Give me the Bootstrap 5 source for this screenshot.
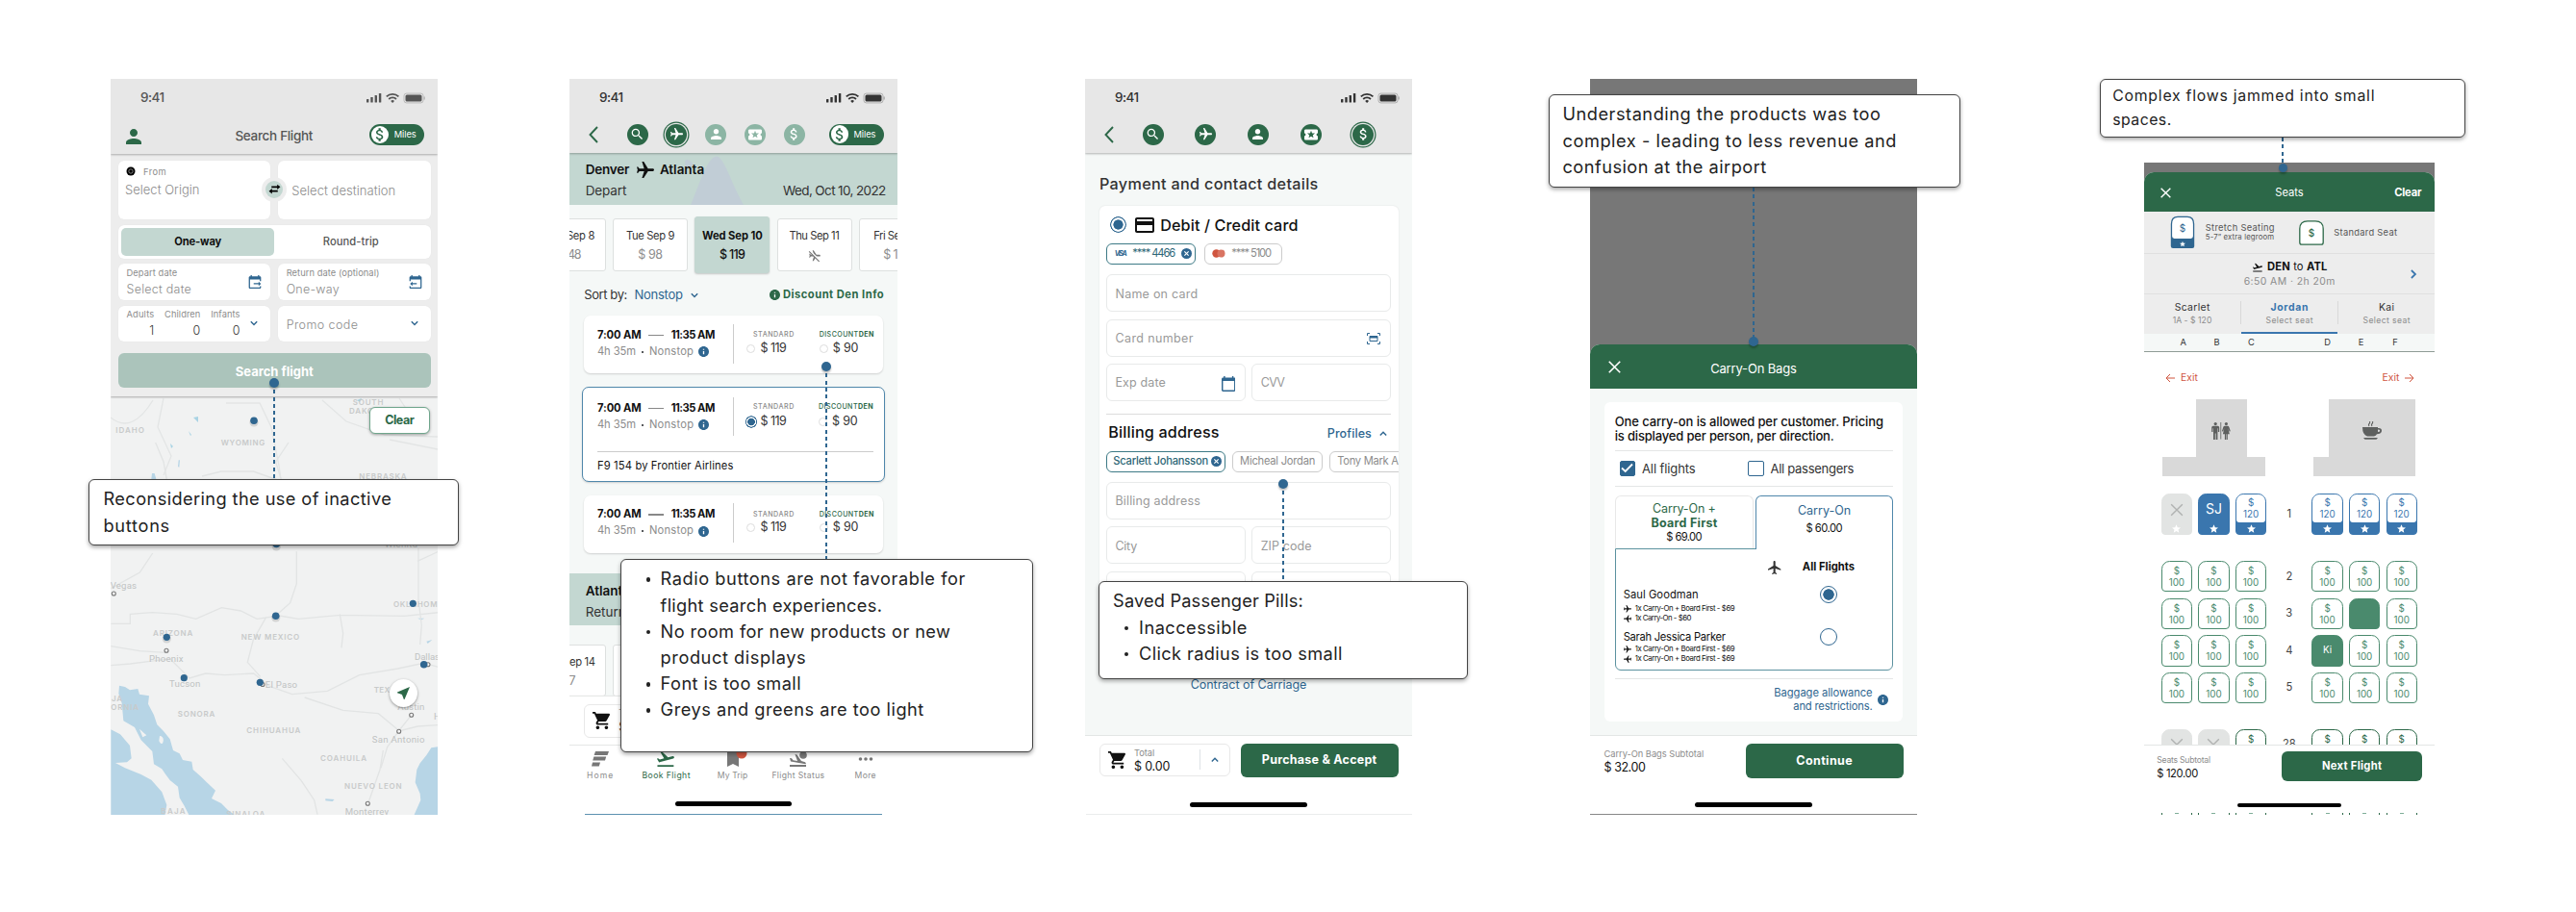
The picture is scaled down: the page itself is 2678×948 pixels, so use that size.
<!DOCTYPE html>
<html lang="en">
<head>
<meta charset="utf-8">
<meta name="viewport" content="width=device-width, initial-scale=1">
<title>Booking flow audit</title>
<link rel="stylesheet" href="https://cdn.jsdelivr.net/npm/bootstrap@5.3.0/dist/css/bootstrap.min.css">
<style>
:root{--green:#2c6848;--blue:#2f6690;--mint:#c3d7d1;--pale:#f5f8f7;--mute:#8c8c8c}
body{margin:0;background:#fff;font-family:Inter,"Liberation Sans",sans-serif;color:#333;line-height:1;width:2678px;height:948px;overflow:hidden}
.board{padding:82px 0 0 115px}
.phone{width:340px;height:765px;flex:none}
.p2{margin-left:137px;width:341px}.p3{margin-left:195px}.p4{margin-left:185px}.p5{margin-left:236px;width:302px;height:678px;margin-top:87px}
.screen{height:100%;overflow:hidden;background:#fff}
[data-w]{white-space:nowrap;display:inline-block;flex:none}
.f7{font-size:7.1px}.f75{font-size:7.8px}.f8{font-size:8.6px}.f9{font-size:9.3px}.f10{font-size:10.400px}.f11{font-size:11.200px}.f12{font-size:12.500px}.f125{font-size:13px}.f13{font-size:13.500px}.f16{font-size:16.200px}
.w5{font-weight:500}.w6{font-weight:600}.w7{font-weight:700}.w3{font-weight:350}
.tg{color:var(--green)}.tb{color:var(--blue)}.tm{color:var(--mute)}.td{color:#111}.t5{color:#555}
.ic{fill:currentColor;flex:none;display:block}
.s8{width:8px;height:8px}.s10{width:10px;height:10px}.s13{width:13px;height:13px}.s14{width:14px;height:14px}.s16{width:16px;height:16px}.s18{width:18px;height:18px}
.s11{width:11px;height:11px}
.ln{stroke:currentColor;fill:none}
.rot{transform:rotate(90deg)}.rotl{transform:rotate(-90deg)}
/* top bars */
.top{background:#e7e7e7;height:76.7px;box-shadow:0 1px 2px rgba(0,0,0,.28);position:relative;z-index:2;flex:none}
.p1 .top{height:78px}
.status{height:39px;padding:0 13px 0 31px}
.steps{height:37.4px;padding:0 14.5px 0 20px}
.steps .back{width:10px;height:18px;margin-right:29.5px;color:var(--green)}
.step{width:22px;height:22px;border-radius:50%;background:var(--green);color:#fff;flex:none}
.step.off{background:#8cb5a4}
.step.now{box-shadow:0 0 0 1.3px #e7e7e7,0 0 0 2.5px var(--green)}
.steplist{gap:18.8px}.p3 .steplist{gap:32.7px}
.miles{width:56.4px;height:22px;border-radius:11px;background:var(--green);color:#fff;padding:0 8px 0 1.4px}
.miles i{width:18.6px;height:18.6px;border-radius:50%;background:#fff;color:var(--green)}
/* search form */
.p1 .navr{height:38px;padding:0 14.3px 0 15.5px}
.p1 .navr .ttl{margin-left:39px;padding-top:4px}
.form1{background:#ededed;height:252px;padding:6.7px 7.5px 0 8px;box-shadow:0 1px 2px rgba(0,0,0,.3);position:relative;z-index:1;flex:none}
.g2{display:grid;grid-template-columns:1fr 1fr;column-gap:7.8px}
.box1{background:#fff;border-radius:6px;box-shadow:0 0 1px rgba(0,0,0,.08)}
.route .box1{height:61px}
.from1{margin-top:6.5px}.orig1{margin-top:7.6px;margin-left:-1px}
.swap{left:149px;top:17px;width:26px;height:26px;border-radius:50%;background:#ededed}
.swap i{width:18px;height:18px;border-radius:50%;background:var(--mint);color:#000}
.seg{height:35px;margin-top:6.3px;padding:3.3px;}
.seg .on{background:var(--mint);border-radius:5px;height:28.3px}
.dates1{margin-top:5.5px}.dates1 .box1{height:37.6px;padding:0 9px 0 8.5px}
.search1{margin-top:12px;height:36.3px;border-radius:6px;background:#abc4bb;color:#fff;padding-top:1.500px}
.lab2{gap:6px}
.mapbox{height:435px;position:relative;flex:none}
.mapbox svg.map{display:block;width:340px;height:435px}
.clearbtn{right:8px;top:11.3px;width:63px;height:28px;border:1px solid #6fa68c;border-radius:6px;background:#fff;box-shadow:0 1px 3px rgba(0,0,0,.35)}
.locate{left:290px;top:294px;width:29px;height:29px;border-radius:50%;background:#fff;box-shadow:0 1px 3px rgba(0,0,0,.4)}
/* flight list */
.pale{background:var(--pale)}
.strip{background:var(--mint);height:54px;padding:9.4px 11.7px 0 16.7px;position:relative;flex:none}
.strip .city{height:18px}.strip .when{margin-top:6.200px}
.strip svg.hill{position:absolute;left:120px;top:0;z-index:0}
.strip>div{position:relative;z-index:1}
.days{gap:7.2px;margin:14.6px 0 0 -40px}
.day{width:78px;height:54.4px;border:1px solid #dde0df;border-radius:3px;background:#fff;flex:none;padding-top:12.1px;gap:7.7px}
.day.sel{background:var(--mint);border-color:var(--mint);height:58.6px;margin:-2px 0;padding-top:14.1px;box-shadow:0 1px 2px rgba(0,0,0,.2)}
.sort{height:16px;margin:17px 14.3px 0 15.3px}
.fl{background:#fff;border-radius:7px;width:311.5px;height:60px;margin:0 0 0 14.6px;padding:0 9.7px 0 14.4px;box-shadow:0 1px 2px rgba(0,0,0,.16)}
.fl.sel{width:314.7px;height:99.7px;margin:13.3px 0 13.3px 13px;padding-left:15px;padding-right:11px;border:1px solid #4f87ab}
.fl .tms{width:142px;border-right:1px solid #ccc;height:40.7px;gap:6px;margin-top:8.5px}
.fl .dash{width:16px;height:1.3px;background:#888}
.fl .pr{margin-top:16px;gap:4.500px}
.fl.sel .tms{margin-top:10px;gap:6.2px}.fl.sel .pr{margin-top:16.8px;gap:5.500px}
.rd{width:9px;height:9px;border-radius:50%;border:1px solid #ddd;flex:none}
.rd.on{border:0;background:radial-gradient(circle,var(--blue) 0 3.6px,#fff 4.1px 4.9px,var(--blue) 5.3px 6px,transparent 6.4px);width:12.6px;height:12.6px;margin:-2px -1.8px}
.fl hr{margin:15.3px 0 0;border-color:#ccc;opacity:1}
.foot2{height:50px;background:#fff;box-shadow:0 -1px 1px #e6e8e7;flex:none;padding:8px 0 0 14.7px;position:relative}
.cartbox{border:1px solid #e8e8e8;border-radius:6px;height:34.6px;width:136px;padding:0 0 0 8px}
.tabs2{height:73px;background:#fff;border-top:1px solid #e5e7e6;position:relative;flex:none}
.tabs2 .tab{gap:5.5px;width:69px;padding-top:5.6px}
.homebar{width:121.5px;height:5px;border-radius:3px;background:#000;margin:0 auto}
/* payment */
.pay{margin:0 14.5px;background:#fff;border-radius:6px;padding:9.500px 7.7px 0 7.7px;height:440px;box-shadow:0 0 2px rgba(0,0,0,.1);overflow:hidden}
.bigr{width:17px;height:17px;border-radius:50%;background:radial-gradient(circle,var(--blue) 0 4.8px,#fff 5.4px 6.9px,var(--blue) 7.5px 8.3px,transparent 8.6px);flex:none}
.pl{height:22px;border:1px solid #ccc;border-radius:6px;flex:none;color:#8c8c8c;background:#fff}
.pl.on{border:1.2px solid #3d7a86;color:#2d6676}
.fd{height:38.8px;border:1px solid #e8eaea;border-radius:6px;padding:2px 9.5px 0 8.3px;color:#999}
.mt8{margin-top:7.6px}
.pay hr{margin:12.5px 0 0;border-color:#ddd;opacity:1}
.foot{flex:none;background:#fff;height:83.5px;border-top:1px solid #e3e6e5;padding:8px 14.5px 0}
.cta{background:var(--green);color:#fff;border-radius:6px;width:164px;height:35.6px;flex:none}
/* bags sheet */
.dim{background:#777}
.sheet{border-radius:10px 10px 0 0;background:var(--pale);overflow:hidden}
.hd{background:var(--green);color:#fff;height:46px;position:relative}
.bags{margin:13.3px 14.7px 14px 15px;background:#fff;border-radius:6px;height:332.4px;padding:14.1px 10.7px 0}
.bags hr{margin:0;border-color:#e4e6e6;opacity:1}
.cb{width:16.6px;height:16.6px;border:1.6px solid var(--blue);border-radius:2px}
.cb.on{background:var(--blue)}
.tabl{width:144.5px;height:55px;border:1px solid #e8e8e8;border-bottom:0;border-radius:6px 6px 0 0;gap:2.6px}
.tabr{width:142.2px;height:56px;border:1px solid #4f87ab;border-bottom:0;border-radius:6px 6px 0 0;background:#fff;margin-bottom:-1px;position:relative;z-index:1;gap:6.5px;padding-top:8.8px}
.pan{border:1.2px solid #5c929f;border-radius:0 0 6px 6px;height:126.6px;padding:0 8px;position:relative}
.pax{gap:2px}
.r18{width:18px;height:18px;border-radius:50%;border:1.6px solid var(--blue)}
.r18.on{background:radial-gradient(circle,var(--blue) 0 5.4px,#fff 6px)}
/* seats */
.p5 .grey{background:#ededed}
.rule{border-bottom:1px solid #e0e0e0}
.paxc{flex:1;border-right:1px solid #d8d8d8;height:24px;gap:3.600px;padding-top:1.600px}
.colrow{height:19px;background:var(--pale);border-bottom:1px solid #8f9c97}
.colrow b{width:38.6px;text-align:center;font-weight:400}
.seatrow{padding-left:17.8px}
.grp{gap:6.4px}
.seatrow .num{width:47.3px;text-align:center;color:#444}
.seat{width:32.2px;height:32.2px;border:1.4px solid #4a8a6d;border-radius:8.5px 8.5px 4px 4px;color:#4a8a6d;background:#fff;font-size:9.8px;text-align:center;padding-top:4px;line-height:12px;flex:none}
.seat.full{background:#4a8a6d;color:#fff;padding-top:9px}
.seat.dk{border-color:var(--green);color:var(--green)}
.seat.xx{background:#e2e4e3;border-color:#e2e4e3;color:#b2b4b3}
.seat.st{height:43.7px;border-color:#3a76ae;background:#3a76ae;color:#3a76ae;padding:0}
.seat.st .inr{background:#fff;border-radius:7px 7px 3px 3px;height:29.5px;padding-top:3.6px}
.seat.st.xx{background:#e2e4e3;border-color:#e2e4e3;color:#b2b4b3}
.seat.st .ful{height:29.5px;color:#fff;font-size:14px;line-height:29px}
.seat .starr{display:block;width:9px;height:9px;margin:1.7px auto 0;fill:#fff}
.blk{background:#d9d9d9;color:#5e605f}
.tick{width:32.2px;height:2px;border:solid var(--green);border-width:0 1.5px}
.tick i{width:4px;height:1px;background:#7fae98}
/* annotations */
.note{position:absolute;z-index:6;background:#fff;border:1.2px solid #444;border-radius:6px;box-shadow:0 2px 4px rgba(0,0,0,.35);font-size:18.200px;line-height:27.2px;color:#222;font-weight:400}
.note ul{margin:0;padding:0;list-style:none}
.note li{position:relative}
.note li.bu::before{content:"";position:absolute;left:-15px;top:12px;width:4.4px;height:4.4px;border-radius:50%;background:#222}
.wire{position:absolute;z-index:5;width:2px;background:repeating-linear-gradient(180deg,var(--blue) 0 4px,transparent 4px 7.3px)}
.pin{position:absolute;z-index:5;width:10px;height:10px;border-radius:50%;background:var(--blue);box-shadow:0 2px 2px rgba(0,0,0,.25)}
.n1{left:-22.7px;top:416px;width:385px;height:69.3px;padding:6.400px 0 0 14.2px}
.n2{left:53px;top:499.3px;width:428.5px;height:200.3px;padding:6.1px 0 0 40.6px}
.n3{left:14.2px;top:522.3px;width:384.3px;height:101.6px;padding:6.2px 0 0 13.9px}.n3 li{left:27px}
.n4{left:-43.3px;top:16.3px;width:428px;height:96.6px;padding:6px 0 0 13.8px}
.n5{left:-45.7px;top:-86.7px;width:380px;height:60.4px;padding:5.1px 0 0 11.9px;font-size:15.8px;line-height:24.3px}
.c1{left:169px;top:316px;height:100px}.d1{left:165px;top:310.7px}
.c2{left:266px;top:299px;height:200px}.d2{left:262px;top:293.7px}
.c3{left:205.3px;top:421px;height:101px}.d3{left:201.3px;top:416.3px}
.c4{left:169.3px;top:113px;height:160px}.d4{left:165.3px;top:268.3px}
.c5{left:143px;top:-26px;height:31px}.d5{left:139.6px;top:1.2px;width:9px;height:9px}
</style>
</head>
<body>
<svg width="0" height="0" class="position-absolute">
<symbol id="plane" viewBox="2 2 20 20"><path d="M21 16v-2l-8-5V3.5c0-.83-.67-1.5-1.5-1.5S10 2.67 10 3.5V9l-8 5v2l8-2.5V19l-2 1.5V22l3.5-1 3.5 1v-1.5L13 19v-5.5l8 2.5z"/></symbol>
<symbol id="person" viewBox="4 4 16 16"><path d="M12 12c2.21 0 4-1.79 4-4s-1.79-4-4-4-4 1.79-4 4 1.79 4 4 4zm0 2c-2.67 0-8 1.34-8 4v2h16v-2c0-2.66-5.33-4-8-4z"/></symbol>
<symbol id="find" viewBox="2 2 20 20"><path d="M15.5 14h-.79l-.28-.27C15.41 12.59 16 11.11 16 9.5 16 5.91 13.09 3 9.5 3S3 5.91 3 9.5 5.91 16 9.5 16c1.61 0 3.09-.59 4.23-1.57l.27.28v.79l5 4.99L20.49 19l-4.99-5zm-6 0C7.01 14 5 11.99 5 9.5S7.01 5 9.5 5 14 7.01 14 9.5 11.99 14 9.5 14z"/></symbol>
<symbol id="money" viewBox="2.5 2.5 19 19"><path d="M11.8 10.9c-2.27-.59-3-1.2-3-2.15 0-1.09 1.01-1.85 2.7-1.85 1.78 0 2.44.85 2.5 2.1h2.21c-.07-1.72-1.12-3.3-3.21-3.81V3h-3v2.16c-1.94.42-3.5 1.68-3.5 3.61 0 2.31 1.91 3.46 4.7 4.13 2.5.6 3 1.48 3 2.41 0 .69-.49 1.79-2.7 1.79-2.06 0-2.87-.92-2.98-2.1h-2.2c.12 2.19 1.76 3.42 3.68 3.83V21h3v-2.15c1.95-.37 3.5-1.5 3.5-3.55 0-2.84-2.43-3.81-4.7-4.4z"/></symbol>
<symbol id="ticket" viewBox="2 2 20 20"><path d="M20 12c0-1.1.9-2 2-2V6c0-1.1-.9-2-2-2H4c-1.1 0-2 .9-2 2v4c1.1 0 2 .9 2 2s-.9 2-2 2v4c0 1.1.9 2 2 2h16c1.1 0 2-.9 2-2v-4c-1.1 0-2-.9-2-2zm-4.4 4.8L12 14.5l-3.6 2.3 1.1-4.1L6.2 10l4.3-.3L12 5.8l1.500 3.9 4.300.3-3.300 2.700 1.100 4.100z"/></symbol>
<symbol id="cart" viewBox="1 2 20 20"><path d="M7 18c-1.1 0-2 .9-2 2s.9 2 2 2 2-.9 2-2-.9-2-2-2zM1 2v2h2l3.6 7.59-1.35 2.45c-.16.28-.25.61-.25.96 0 1.1.9 2 2 2h12v-2H7.42c-.14 0-.25-.11-.25-.25l.03-.12.9-1.63h7.45c.75 0 1.41-.41 1.75-1.03l3.58-6.49c.08-.14.12-.31.12-.48 0-.55-.45-1-1-1H5.21l-.94-2H1zm16 16c-1.1 0-2 .9-2 2s.9 2 2 2 2-.9 2-2-.9-2-2-2z"/></symbol>
<symbol id="info" viewBox="2 2 20 20"><path d="M12 2C6.48 2 2 6.48 2 12s4.48 10 10 10 10-4.48 10-10S17.52 2 12 2zm1.2 15h-2.4v-6h2.4v6zm0-8h-2.4V6.8h2.4V9z"/></symbol>
<symbol id="closec" viewBox="2 2 20 20"><path d="M12 2a10 10 0 1 0 0 20 10 10 0 0 0 0-20zm4.6 13.2-1.4 1.4L12 13.4l-3.2 3.2-1.4-1.4 3.2-3.2-3.2-3.2 1.4-1.4 3.2 3.2 3.2-3.2 1.4 1.4-3.2 3.2z"/></symbol>
<symbol id="ccard" viewBox="2 4 20 16"><path d="M20 4H4c-1.1 0-2 .9-2 2v12c0 1.1.9 2 2 2h16c1.1 0 2-.9 2-2V6c0-1.1-.9-2-2-2zm0 14H4v-6h16v6zm0-10H4V6h16v2z"/></symbol>
<symbol id="cal" viewBox="2 1 20 22"><path d="M20 3h-1V1h-2v2H7V1H5v2H4c-1.1 0-2 .9-2 2v16c0 1.1.9 2 2 2h16c1.1 0 2-.9 2-2V5c0-1.1-.9-2-2-2zm0 18H4V8h16v13z"/></symbol>
<symbol id="calout" viewBox="2 1 20 22"><path d="M20 3h-1V1h-2v2H7V1H5v2H4c-1.1 0-2 .9-2 2v16c0 1.1.9 2 2 2h16c1 0 2-.9 2-2v-2h-2v2H4V8h16v3h2V5c0-1.100-.9-2-2-2zM10 14v2h8v2.500l4-3.500-4-3.500V14z"/></symbol>
<symbol id="calin" viewBox="2 1 20 22"><path d="M20 3h-1V1h-2v2H7V1H5v2H4c-1.100 0-2 .9-2 2v6h2V8h16v13H4v-2H2v2c0 1.100.9 2 2 2h16c1.100 0 2-.9 2-2V5c0-1.100-.9-2-2-2zM14 14v2H7v2.500L3 15l4-3.500V14z"/></symbol>
<symbol id="takeoff" viewBox="2 3 20.200 18"><path d="M2.500 19h19v2h-19zm19.570-9.360c-.21-.8-1.040-1.280-1.840-1.060L14.920 10l-6.900-6.430-1.930.51 4.140 7.170-4.970 1.330-1.970-1.540-1.450.39 1.820 3.160.77 1.330 1.600-.43 5.310-1.420 4.350-1.160L21 11.490c.81-.23 1.280-1.050 1.070-1.850z"/></symbol>
<symbol id="near" viewBox="3 3 18 18"><path d="M21 3L3 10.530v.98l6.840 2.650L12.480 21h.98L21 3z"/></symbol>
<symbol id="star" viewBox="2 2 20 19"><path d="M12 17.270 18.180 21l-1.640-7.030L22 9.240l-7.190-.61L12 2 9.190 8.630 2 9.240l5.460 4.730L5.820 21z"/></symbol>
<symbol id="dn" viewBox="0 0 8 8"><path d="M.8 2.300 4 5.600l3.200-3.300" fill="none" stroke="currentColor" stroke-width="1.400"/></symbol>
<symbol id="up" viewBox="0 0 8 8"><path d="M.8 5.600 4 2.300l3.200 3.300" fill="none" stroke="currentColor" stroke-width="1.400"/></symbol>
<symbol id="ex" viewBox="0 0 12 12"><path d="m.7.7 10.600 10.600M11.300.7.7 11.300" fill="none" stroke="currentColor" stroke-width="1.500"/></symbol>
<symbol id="back" viewBox="0 0 10 18"><path d="M9 1 1.500 9 9 17" fill="none" stroke="currentColor" stroke-width="1.900"/></symbol>
<symbol id="sys" viewBox="0 0 61 12"><g fill="currentColor"><rect x="0" y="7" width="2.400" height="3.500" rx=".6"/><rect x="4.300" y="5" width="2.400" height="5.500" rx=".6"/><rect x="8.600" y="3" width="2.400" height="7.500" rx=".6"/><rect x="12.900" y="1" width="2.400" height="9.500" rx=".6"/><rect x="40.500" y="2.600" width="17" height="6.800" rx="1.500"/></g><g fill="none" stroke="currentColor" stroke-width="1.800"><path d="M20.800 4.400a9 9 0 0 1 12.600 0M23.200 7a5.600 5.600 0 0 1 7.800 0"/></g><path d="m27.100 11-1.900-2a2.800 2.800 0 0 1 3.800 0z" fill="currentColor"/><rect x="39" y="1.100" width="20" height="9.800" rx="2.500" fill="none" stroke="currentColor" stroke-opacity=".3"/><path d="M60.200 4.500v3" stroke="currentColor" stroke-opacity=".4" stroke-width="1"/></symbol>
</svg>

<main class="board d-flex align-items-start">

<!-- 1. search -->
<section class="phone p1 position-relative">
 <div class="screen d-flex flex-column">
  <header class="top">
   <div class="status d-flex align-items-center justify-content-between"><span class="f13 w5 t5" data-w="25">9:41</span><svg class="ic t5" width="61" height="12"><use href="#sys"/></svg></div>
   <div class="navr d-flex align-items-center justify-content-between"><svg class="ic s16 tg mt-1"><use href="#person"/></svg><span class="f13 w5 t5 ttl" data-w="81">Search Flight</span>
    <span class="miles d-flex align-items-center justify-content-between"><i class="d-flex align-items-center justify-content-center"><svg class="ic s14"><use href="#money"/></svg></i><span class="f9" data-w="23">Miles</span></span></div>
  </header>
  <div class="form1">
   <div class="route g2 position-relative">
    <div class="box1 px-2 d-flex flex-column"><div class="from1 d-flex align-items-center gap-1"><svg class="s10 me-1 ic" viewBox="0 0 10 10"><circle cx="5" cy="5" r="4.500" fill="#000"/><circle cx="5" cy="5" r="2.200" fill="none" stroke="#999" stroke-width=".8"/></svg><span class="f9 tm" data-w="23.700">From</span></div><span class="f125 w3 tm orig1" data-w="77.500">Select Origin</span></div>
    <div class="box1 d-flex align-items-center" style="padding:2px 0 0 14px"><span class="f125 w3 tm" data-w="108">Select destination</span></div>
    <span class="swap position-absolute d-flex align-items-center justify-content-center"><i class="d-flex align-items-center justify-content-center"><svg class="s13 ic" viewBox="0 0 12 12"><path d="M3 3.200h5.500V1.500l3 2.500-3 2.500V4.800H3zM9 7.200H3.500V5.500l-3 2.500 3 2.500V8.800H9z" fill="#000"/></svg></i></span>
   </div>
   <div class="seg box1 g2 align-items-center text-center" style="column-gap:0"><div class="on d-flex align-items-center justify-content-center"><span class="f11 w7 td" data-w="49">One-way</span></div><div class="d-flex justify-content-center"><span class="f11 w5 t5" data-w="58">Round-trip</span></div></div>
   <div class="dates1 g2">
    <div class="box1 d-flex align-items-center justify-content-between"><div class="d-flex flex-column lab2 align-items-start"><span class="f9 tm" data-w="52.700">Depart date</span><span class="f12 w3 tm" data-w="67.300">Select date</span></div><svg class="ic s14 tb"><use href="#calout"/></svg></div>
    <div class="box1 d-flex align-items-center justify-content-between"><div class="d-flex flex-column lab2 align-items-start"><span class="f9 tm" data-w="96.700">Return date (optional)</span><span class="f12 w3 tm" data-w="55">One-way</span></div><svg class="ic s14 tb"><use href="#calin"/></svg></div>
   </div>
   <div class="dates1 g2">
    <div class="box1 d-flex align-items-center justify-content-between"><div class="d-flex flex-column lab2 align-items-end"><span class="f9 tm" data-w="28.700">Adults</span><span class="f12 w3">1</span></div><div class="d-flex flex-column lab2 align-items-end"><span class="f9 tm" data-w="37.300">Children</span><span class="f12 w3">0</span></div><div class="d-flex flex-column lab2 align-items-end"><span class="f9 tm" data-w="30.300">Infants</span><span class="f12 w3">0</span></div><svg class="ic s8 tb me-1"><use href="#dn"/></svg></div>
    <div class="box1 d-flex align-items-center justify-content-between"><span class="f12 w3 tm pt-1" data-w="74.300">Promo code</span><svg class="ic s8 tb me-1"><use href="#dn"/></svg></div>
   </div>
   <div class="search1 d-flex align-items-center justify-content-center"><span class="f125 w7" data-w="81">Search flight</span></div>
  </div>
  <div class="mapbox">
   <svg class="map" viewBox="0 330 340 435">
    <rect y="330" width="340" height="435" fill="#f1f2f2"/>
    <g transform="translate(-35 378) scale(.33333)">
     <g fill="#b7d5e6"><path d="M132 758l18 4 15 10 25-4 5 17 30 5-3 25 18 35 10 30 20 20 20 25 10 35 20 10 10 20 28 5 4 25 23 20 20 20 27 25-12 25 30 15 20 20 24 18H350l-15-30-15-25-5-35-25-20-15-20-10-15-25-15-5-40-35-35-20-40-35-20-5-55-10-30z"/><path d="M106 895l29 15 30 35 5 40-14 12-36 2 30 16 50 20 32 17 33 38 15 40-8 45H106z"/><path d="M1130 948l-25 4-15 23-20 25-10 20-5 40 15 35 2 20-22 50h80z"/><path d="M234 96l8 0 5 18h-15zM317 55h4l-2 22-4-2zM775 1111l28 2-6 6-22-2zM1090 620l18-5-14 12zM1062 548h22l-10 5z"/></g>
     <path d="M258 915c10 0 14 10 10 20s-10 0-12-5zM195 893l22 20-12 6z" fill="#f1f2f2"/>
     <g fill="none" stroke="#e2e4e4" stroke-width="4"><path d="M106 565h60v-30l70-5 75 5 60 15 80-35 60 10 50 25 70-10 60 10 130-12 200 3 106-11M106 635l90 15 80 5M106 695l60-5 80-10 45-5 60 60 50-15 60 5 90-5 50 40 70 25 110-10 100-50 120-20 70-15M590 545l-40 70-18 70 40 45M660 0l-40 60 15 50M685 340l0 100-20 60-45 40M106 455l90-50 40-60M245 0l25 60 10 55M390 105l60-15 100 0 85 30M820 535l10 60-5 45M1065 330l0 160 10 80-5 60M1043 850l-40 50-35 50-20 65M710 795l120 40 110 10 60 50M1003 900l60-15 64-4M1127 700l-30-8M1127 340l-65 30M640 985l60 70 40 60 10 45M955 960l-10 60-35 100"/></g>
    </g>
    <g fill="none" stroke="#e3e5e5" stroke-width="1.300"><path d="M0 352q22 18 44-18M55 332l-6 30 14 30-8 20M120 337l35 0 12 25 8 40 3 20M220 334l25 22 40 14 55 2M290 375l50 10M300 332l12 18"/></g>
    <g fill="#a9d3e4"><path d="M86 352l5-1 0 6-3-3zM81 366l3 4-1 1zM256 334l5-2-2 4zM62 379l3 3-2 2z"/></g>
    <g font-size="8" font-weight="600" fill="#c8caca">
     <text x="5.300" y="368" textLength="29.500">IDAHO</text><text x="114.700" y="381" textLength="45.600">WYOMING</text><text x="251.700" y="339.300" textLength="31.700">SOUTH</text><text x="248" y="348" textLength="37">DAKOTA</text><text x="258.300" y="416.300" textLength="49.400">NEBRASKA</text><text x="294" y="548.700" textLength="52">OKLAHOMA</text><text x="44" y="579" textLength="41.300">ARIZONA</text><text x="135.700" y="583.300" textLength="60.500">NEW MEXICO</text><text x="273.700" y="638" textLength="28">TEXAS</text><text x="1" y="647.300" textLength="11">JA</text><text x=".3" y="656" textLength="28.700">ORNIA</text><text x="69.700" y="663" textLength="38.600">SONORA</text><text x="141.300" y="680" textLength="56">CHIHUAHUA</text><text x="218" y="709" textLength="48">COAHUILA</text><text x="243" y="738" textLength="59.700">NUEVO LEON</text><text x="52.300" y="764" textLength="25.400">BAJA</text><text x="120.300" y="766.500" textLength="40">SINALOA</text><text x="167.700" y="770.500" textLength="44">DURANGO</text></g>
    <g font-size="9.600" fill="#c0c2c2" font-family="Roboto">
     <text x="-.3" y="530.300" textLength="27.300">Vegas</text><text x="40" y="605.700" textLength="35.500">Phoenix</text><text x="61" y="632" textLength="32.300">Tucson</text><text x="160.700" y="633" textLength="33.400">El Paso</text><text x="316" y="604.300" textLength="26">Dallas</text><text x="298.300" y="656" textLength="28">Austin</text><text x="271.700" y="689.700" textLength="54.700">San Antonio</text><text x="336" y="665.500">H</text><text x="285" y="487" textLength="34">Wichita</text><text x="243.700" y="764.700" textLength="45.400">Monterrey</text></g>
    <g fill="#f5f5f5" stroke="#777" stroke-width="1.100"><circle cx="3.300" cy="535" r="2"/><circle cx="58" cy="594.300" r="2"/><circle cx="330" cy="608.700" r="2"/><circle cx="158" cy="629.500" r="2"/><circle cx="312.700" cy="661.300" r="2"/><circle cx="299.700" cy="678.300" r="2"/><circle cx="267.300" cy="753.300" r="2"/></g>
    <g fill="#000" opacity=".12"><circle cx="149" cy="357" r="4.600"/><circle cx="172.300" cy="486" r="4.600"/><circle cx="171.700" cy="560" r="4.600"/><circle cx="58.300" cy="582" r="4.600"/></g>
    <g fill="#2f6690"><circle cx="149" cy="355.300" r="3.800"/><circle cx="172.300" cy="483.500" r="3.800"/><circle cx="171.700" cy="558.300" r="3.800"/><circle cx="58.300" cy="580.300" r="3.600"/><circle cx="76.300" cy="622.700" r="3.600"/><circle cx="155.300" cy="627.300" r="3.600"/><circle cx="314.300" cy="545.300" r="3.600"/><circle cx="325.700" cy="608.700" r="3.800"/></g>
   </svg>
   <span class="clearbtn position-absolute d-flex align-items-center justify-content-center"><span class="f12 w7 tg" data-w="30.700">Clear</span></span>
   <span class="locate position-absolute d-flex align-items-center justify-content-center"><svg class="ic s13 tg"><use href="#near"/></svg></span>
  </div>
 </div>
 <i class="wire c1"></i><i class="pin d1"></i>
 <div class="note n1"><span data-w="299.300">Reconsidering the use of inactive</span><br><span data-w="68.700">buttons</span></div>
</section>

<!-- 2. flight results -->
<section class="phone p2 position-relative">
 <div class="screen pale d-flex flex-column">
  <header class="top">
   <div class="status d-flex align-items-center justify-content-between"><span class="f13 w5" data-w="25">9:41</span><svg class="ic" width="61" height="12"><use href="#sys"/></svg></div>
   <div class="steps d-flex align-items-center"><svg class="back"><use href="#back"/></svg>
    <div class="steplist d-flex"><span class="step d-flex align-items-center justify-content-center"><svg class="ic s13"><use href="#find"/></svg></span><span class="step now d-flex align-items-center justify-content-center"><svg class="ic s13 rot"><use href="#plane"/></svg></span><span class="step off d-flex align-items-center justify-content-center"><svg class="ic s11"><use href="#person"/></svg></span><span class="step off d-flex align-items-center justify-content-center"><svg class="ic s14"><use href="#ticket"/></svg></span><span class="step off d-flex align-items-center justify-content-center"><svg class="ic s13"><use href="#money"/></svg></span></div>
    <span class="miles d-flex align-items-center justify-content-between ms-auto"><i class="d-flex align-items-center justify-content-center"><svg class="ic s14"><use href="#money"/></svg></i><span class="f9" data-w="23">Miles</span></span></div>
  </header>
  <div class="strip"><svg class="hill" width="66" height="54" viewBox="0 0 66 54"><path d="M6 54C14 36 23 4 33 3.500 41 4 50 36 61 54zM-4 14Q2 0 10 14z" fill="#c1cdd6"/></svg>
   <div class="city d-flex align-items-center"><span class="f13 w6 td" data-w="45.700">Denver</span><svg class="ic s18 rot td" style="margin:0 6px 0 7.500px"><use href="#plane"/></svg><span class="f13 w6 td" data-w="46.300">Atlanta</span></div>
   <div class="when d-flex justify-content-between"><span class="f13" data-w="42.700">Depart</span><span class="f13" data-w="107.300">Wed, Oct 10, 2022</span></div></div>
  <div class="days d-flex">
   <div class="day d-flex flex-column align-items-center"><span class="f11" data-w="55">Mon Sep 8</span><span class="f12 tm" data-w="27">$ 148</span></div>
   <div class="day d-flex flex-column align-items-center"><span class="f11" data-w="50.300">Tue Sep 9</span><span class="f12 tm" data-w="25.700">$ 98</span></div>
   <div class="day sel d-flex flex-column align-items-center"><span class="f11 w7 td" data-w="62.700">Wed Sep 10</span><span class="f12 w5 td" data-w="27">$ 119</span></div>
   <div class="day d-flex flex-column align-items-center"><span class="f11" data-w="52.300">Thu Sep 11</span><svg class="ic s14" viewBox="0 0 24 24" style="color:#777"><g transform="rotate(90 12 12)"><path d="M21 16v-2l-8-5V3.500a1.500 1.500 0 0 0-3 0V9l-8 5v2l8-2.500V19l-2 1.500V22l3.500-1 3.500 1v-1.500L13 19v-5.500z"/></g><path d="M2 2l20 20" stroke="#fff" stroke-width="3.500"/><path d="M2 4l18 18" stroke="#777" stroke-width="2"/></svg></div>
   <div class="day d-flex flex-column align-items-center"><span class="f11" data-w="47">Fri Sep 12</span><span class="f12 tm" data-w="27">$ 119</span></div>
  </div>
  <div class="sort d-flex align-items-center"><span class="f125" data-w="45">Sort by:</span><span class="f125 tb" style="margin-left:7.300px" data-w="50.300">Nonstop</span><svg class="ic s8 tb ms-2"><use href="#dn"/></svg><span class="ms-auto d-flex align-items-center tg"><svg class="ic s11" style="margin-right:3px"><use href="#info"/></svg><span class="f11 w7" data-w="104.700">Discount Den Info</span></span></div>
  <div style="height:14px" class="flex-shrink-0"></div>
  <div id="flights"></div>
  <div style="height:21.700px" class="flex-shrink-0"></div>
  <div class="strip"><div class="city d-flex align-items-center"><span class="f13 w6 td" data-w="46.300">Atlanta</span></div><div class="when d-flex"><span class="f13" data-w="42">Return</span></div></div>
  <div class="days d-flex" style="margin-top:19.300px"><div class="day d-flex flex-column align-items-center"><span class="f11" data-w="56">Sun Sep 14</span><span class="f12 tm" data-w="15">$ 7</span></div><div class="day"></div><div class="day"></div></div>
  <div class="foot2 mt-auto"><div class="cartbox d-flex align-items-center bg-white"><svg class="ic s18 td" style="margin-right:9.500px"><use href="#cart"/></svg><div class="d-flex flex-column" style="gap:4px"><span class="f9 tm" data-w="21.300">Total</span><span class="f12" data-w="37.300">$ 0.00</span></div></div></div>
  <div class="tabs2"><div class="d-flex tm">
    <div class="tab d-flex flex-column align-items-center ps-0" style="width:63.500px"><svg class="ic" width="18" height="16" viewBox="0 0 18 16"><path d="M4 0h14l-1.500 4H2.600zM2.400 5.500h12.800L14 9.500H1.200zM1 11.500h8L7.800 15.500H0z" fill="#777"/></svg><span class="f8" data-w="27.300">Home</span></div>
    <div class="tab d-flex flex-column align-items-center tg" style="width:74.500px"><svg class="ic" width="18" height="16"><use href="#takeoff"/></svg><span class="f8" data-w="50">Book Flight</span></div>
    <div class="tab d-flex flex-column align-items-center" style="width:64px"><svg class="ic overflow-visible" width="18" height="16" viewBox="0 0 18 16"><path d="M3 0h12v16l-6-3-6 3z" fill="#777"/><circle cx="18" cy="2" r="5.500" fill="#d0553f"/></svg><span class="f8" data-w="31.300">My Trip</span></div>
    <div class="tab d-flex flex-column align-items-center" style="width:73px"><svg class="ic" width="18" height="16" viewBox="0 0 18 16"><path d="M0 14h17v2H0zM0 7l2 .2 1.500 2L8 10 5.500 3l2 .4L12 10l4 1.200q1.500.8.500 2L1 10.500z" fill="#777"/><circle cx="14" cy="4" r="3.800" fill="#777"/></svg><span class="f8" data-w="54.700">Flight Status</span></div>
    <div class="tab d-flex flex-column align-items-center" style="width:67px"><svg class="ic" width="16" height="16" viewBox="0 0 16 16"><g fill="#777"><circle cx="2.500" cy="8" r="1.800"/><circle cx="8" cy="8" r="1.800"/><circle cx="13.500" cy="8" r="1.800"/></g></svg><span class="f8" data-w="22">More</span></div></div>
   <div class="homebar" style="margin-top:22.500px"></div>
   <div class="mx-3" style="height:1.200px;margin-top:7.500px;background:#5c92b0"></div>
  </div>
 </div>
 <i class="wire c2"></i><i class="pin d2"></i>
 <div class="note n2"><ul><li class="bu"><span data-w="316.700">Radio buttons are not favorable for</span></li><li><span data-w="230.300">flight search experiences.</span></li><li class="bu"><span data-w="301.300">No room for new products or new</span></li><li><span data-w="151">product displays</span></li><li class="bu"><span data-w="146">Font is too small</span></li><li class="bu"><span data-w="273.700">Greys and greens are too light</span></li></ul></div>
</section>

<!-- 3. payment -->
<section class="phone p3 position-relative">
 <div class="screen pale d-flex flex-column">
  <header class="top">
   <div class="status d-flex align-items-center justify-content-between"><span class="f13 w5" data-w="25">9:41</span><svg class="ic" width="61" height="12"><use href="#sys"/></svg></div>
   <div class="steps d-flex align-items-center"><svg class="back"><use href="#back"/></svg>
    <div class="steplist d-flex"><span class="step d-flex align-items-center justify-content-center"><svg class="ic s13"><use href="#find"/></svg></span><span class="step d-flex align-items-center justify-content-center"><svg class="ic s13 rot"><use href="#plane"/></svg></span><span class="step d-flex align-items-center justify-content-center"><svg class="ic s11"><use href="#person"/></svg></span><span class="step d-flex align-items-center justify-content-center"><svg class="ic s14"><use href="#ticket"/></svg></span><span class="step now d-flex align-items-center justify-content-center"><svg class="ic s13"><use href="#money"/></svg></span></div></div>
  </header>
  <div class="flex-grow-1 overflow-hidden">
   <div class="d-flex align-items-center" style="height:55.600px;padding:9px 0 0 15px"><span class="f16 w5" data-w="227.300">Payment and contact details</span></div>
   <div class="pay">
    <div class="d-flex align-items-center ps-1" style="height:20px"><i class="bigr"></i><svg class="ic td" width="20" height="16" style="margin:0 6px 0 9px"><use href="#ccard"/></svg><span class="f16 w5 td" data-w="143.300">Debit / Credit card</span></div>
    <div class="d-flex" style="gap:9.300px;margin-top:8.900px"><span class="pl on d-flex align-items-center justify-content-between" style="width:93px;padding:0 3.500px 0 7.500px"><b class="fst-italic f7 tb" data-w="13">VISA</b><span class="f11" data-w="45">**** 4466</span><svg class="ic s11 tb"><use href="#closec"/></svg></span><span class="pl d-flex align-items-center justify-content-between" style="width:80.500px;padding:0 10px 0 7px"><svg class="ic" width="14" height="9" viewBox="0 0 14 9"><circle cx="4.500" cy="4.500" r="4.200" fill="#d0553f"/><circle cx="9.500" cy="4.500" r="4" fill="#d97462"/></svg><span class="f11" data-w="41.700">**** 5100</span></span></div>
    <div class="fd d-flex align-items-center" style="margin-top:10.800px"><span class="f12" data-w="85.700">Name on card</span></div>
    <div class="fd mt8 d-flex align-items-center justify-content-between"><span class="f12" data-w="81">Card number</span><svg class="ic ln tb" width="14" height="12" viewBox="0 0 14 12"><path d="M.5 3V.5H3M11 .5h2.500V3M13.500 9v2.500H11M3 11.500H.5V9M3 3.500h8v5H3z"/><path d="M3 4.500h8" stroke-width="2"/></svg></div>
    <div class="g2 mt8" style="column-gap:6.700px"><div class="fd d-flex align-items-center justify-content-between"><span class="f12" data-w="52.300">Exp date</span><svg class="ic tb" width="14.500" height="16"><use href="#cal"/></svg></div><div class="fd d-flex align-items-center"><span class="f12" data-w="25.300">CVV</span></div></div>
    <hr>
    <div class="d-flex align-items-center justify-content-between px-1 pe-1" style="height:36.500px"><span class="f16 w5 td" style="margin-left:-2px" data-w="115.300">Billing address</span><span class="d-flex align-items-center tb pt-1"><span class="f12 w5" data-w="46">Profiles</span><svg class="ic s8 ms-2"><use href="#up"/></svg></span></div>
    <div class="d-flex" style="gap:7.200px;margin:1.500px -8px 0 0"><span class="pl on d-flex align-items-center justify-content-between" style="width:124px;padding:0 3px 0 6px"><span class="f11 w5" data-w="99">Scarlett Johansson</span><svg class="ic s11 tb"><use href="#closec"/></svg></span><span class="pl d-flex align-items-center justify-content-center" style="width:93.700px"><span class="f11" data-w="78.300">Micheal Jordan</span></span><span class="pl d-flex align-items-center" style="width:110px;padding-left:7px"><span class="f11" data-w="86">Tony Mark Anton</span></span></div>
    <div class="fd d-flex align-items-center" style="margin-top:10.500px"><span class="f12" data-w="88.300">Billing address</span></div>
    <div class="g2 mt8" style="column-gap:6.700px"><div class="fd d-flex align-items-center"><span class="f12" data-w="22.700">City</span></div><div class="fd d-flex align-items-center"><span class="f12" data-w="53">ZIP code</span></div></div>
    <div class="g2 mt8" style="column-gap:6.700px"><div class="fd"></div><div class="fd"></div></div>
   </div>
   <div class="d-flex justify-content-center tb" style="padding-top:52.200px"><span class="f12" data-w="120.700">Contract of Carriage</span></div>
  </div>
  <div class="foot"><div class="d-flex justify-content-between">
   <div class="cartbox d-flex align-items-center"><svg class="ic s18 td" style="margin-right:9.500px"><use href="#cart"/></svg><div class="d-flex flex-column" style="gap:3.700px;padding-top:1px"><span class="f9 tm" data-w="21.300">Total</span><span class="f12 td" data-w="37.300">$ 0.00</span></div><i class="border-start ms-auto" style="height:21px"></i><svg class="ic s8 tb" style="margin:0 11px"><use href="#up"/></svg></div>
   <div class="cta d-flex align-items-center justify-content-center"><span class="f12 w7" data-w="119.300">Purchase &amp; Accept</span></div></div>
   <div class="homebar" style="margin-top:25.500px"></div><div style="height:1px;background:#eaecec;margin:7px -14px 0"></div></div>
 </div>
 <i class="wire c3"></i><i class="pin d3"></i>
 <div class="note n3"><ul><span data-w="197.700">Saved Passenger Pills:</span><li class="bu"><span data-w="112.300">Inaccessible</span></li><li class="bu"><span data-w="211.300">Click radius is too small</span></li></ul></div>
</section>

<!-- 4. bags -->
<section class="phone p4 position-relative">
 <div class="screen dim d-flex flex-column">
  <div style="height:276.300px" class="flex-shrink-0"></div>
  <div class="sheet flex-grow-1">
   <div class="hd d-flex align-items-center justify-content-center"><svg class="ic s13 position-absolute" style="left:19px"><use href="#ex"/></svg><span class="f125 pt-1" data-w="89.700">Carry-On Bags</span></div>
   <div class="bags">
    <div class="d-flex flex-column td" style="gap:2.400px"><span class="f125 w5" data-w="279.300">One carry-on is allowed per customer. Pricing</span><span class="f125 w5" data-w="228">is displayed per person, per direction.</span></div>
    <hr style="margin-top:8px">
    <div class="d-flex align-items-center" style="height:35.600px;padding-left:5px"><i class="cb on d-flex align-items-center justify-content-center"><svg width="13" height="11" viewBox="0 0 13 11"><path d="M1 5.500 4.700 9 12 1.500" fill="none" stroke="#fff" stroke-width="1.800"/></svg></i><span class="f125" style="margin-left:6.700px;padding-top:2px" data-w="55.700">All flights</span><i class="cb" style="margin-left:54.500px"></i><span class="f125" style="margin-left:6.700px;padding-top:2px" data-w="87">All passengers</span></div>
    <hr>
    <div class="d-flex justify-content-between" style="margin-top:9.600px"><div class="tabl d-flex flex-column align-items-center justify-content-center"><span class="f12 tg" data-w="65.700">Carry-On +</span><span class="f12 w7 tg" data-w="68.700">Board First</span><span class="f11 td" data-w="37.300">$ 69.00</span></div><div class="tabr d-flex flex-column align-items-center"><span class="f12 tb" data-w="55.300">Carry-On</span><span class="f11 td" data-w="38">$ 60.00</span></div></div>
    <div class="pan d-flex justify-content-between">
     <div class="td" style="padding-top:42px"><div class="pax d-flex flex-column"><span class="f11" data-w="78">Saul Goodman</span><div class="d-flex align-items-center" style="margin-top:2.500px"><svg class="ic s8 rot"><use href="#plane"/></svg><span class="f75 ms-1" data-w="104">1x Carry-On + Board First - $69</span></div><div class="d-flex align-items-center"><svg class="ic s8 rotl"><use href="#plane"/></svg><span class="f75 ms-1" data-w="58.700">1x Carry-On - $60</span></div></div>
      <div class="pax d-flex flex-column" style="margin-top:10px"><span class="f11" data-w="106.300">Sarah Jessica Parker</span><div class="d-flex align-items-center" style="margin-top:.5px"><svg class="ic s8 rot"><use href="#plane"/></svg><span class="f75 ms-1" data-w="104">1x Carry-On + Board First - $69</span></div><div class="d-flex align-items-center"><svg class="ic s8 rotl"><use href="#plane"/></svg><span class="f75 ms-1" data-w="104">1x Carry-On + Board First - $69</span></div></div></div>
     <div class="d-flex flex-column align-items-center" style="padding:11.500px 30.500px 0 0"><div class="d-flex align-items-center"><svg class="ic s14" style="margin:0 22px 0 -36px"><use href="#plane"/></svg><span class="f11 w7 td" data-w="54.300">All Flights</span></div><i class="r18 on" style="margin-top:12.500px"></i><i class="r18" style="margin-top:25.600px"></i></div>
    </div>
    <hr style="margin-top:8px">
    <div class="d-flex justify-content-end align-items-center tb" style="margin-top:9.500px;padding-right:5px"><div class="d-flex flex-column align-items-end" style="gap:2.400px;margin-right:5px"><span class="f11" data-w="102.300">Baggage allowance</span><span class="f11" data-w="82.300">and restrictions.</span></div><svg class="ic s11"><use href="#info"/></svg></div>
   </div>
   <div class="foot"><div class="d-flex justify-content-between"><div class="d-flex flex-column" style="gap:4.200px;padding-top:6px"><span class="f9 tm" data-w="103.700">Carry-On Bags Subtotal</span><span class="f12 td" data-w="43.300">$ 32.00</span></div><div class="cta d-flex align-items-center justify-content-center"><span class="f12 w7" data-w="58.300">Continue</span></div></div>
   <div class="homebar" style="margin-top:25px"></div><div style="height:1.200px;background:#888;margin:7px -14.500px 0"></div></div>
  </div>
 </div>
 <i class="wire c4"></i><i class="pin d4"></i>
 <div class="note n4"><span data-w="330.300">Understanding the products was too</span><br><span data-w="347">complex - leading to less revenue and</span><br><span data-w="211.700">confusion at the airport</span></div>
</section>

<!-- 5. seats -->
<section class="phone p5 position-relative">
 <div class="screen d-flex flex-column">
  <div class="dim flex-shrink-0" style="padding-top:10px"><div class="sheet"><div class="hd d-flex align-items-center justify-content-center" style="height:41px;padding-top:2px"><svg class="ic s11 position-absolute" style="left:17px"><use href="#ex"/></svg><span class="f11" data-w="29.300">Seats</span><span class="f11 w7 position-absolute" style="right:13.500px" data-w="28.300">Clear</span></div></div></div>
  <div class="grey flex-shrink-0">
   <div class="rule d-flex align-items-center t5" style="height:44.300px;padding-left:27.300px">
    <svg width="26" height="35" viewBox="0 0 26 35"><path d="M8 .8h10q7.200 0 7.200 8V32q0 2-2 2H3q-2.200 0-2.200-2V8.800Q.8.800 8 .8z" fill="#2f6690"/><path d="M8 2.100h10q5.900 0 5.900 7v12.500q0 2.400-2.400 2.400h-17q-2.400 0-2.400-2.400V9.100q0-7 5.900-7z" fill="#fff"/><text x="13" y="16.500" font-size="10" text-anchor="middle" fill="#2f6690">$</text><use href="#star" x="10" y="26.500" width="6" height="6" fill="#fff"/></svg>
    <div class="d-flex flex-column" style="margin-left:10.500px;gap:1.500px"><span class="f9" data-w="71.700">Stretch Seating</span><span class="f75" data-w="71.300">5-7” extra legroom</span></div>
    <svg width="26" height="26" viewBox="0 0 26 26" style="margin-left:25.500px"><path d="M9 .8h8q8.200 0 8.200 8V23q0 2.200-2.200 2.200H3Q.8 25.200.8 23V8.800Q.8.800 9 .8z" fill="#fff" stroke="#2c6848" stroke-width="1.300"/><text x="13" y="16.500" font-size="10" font-weight="500" text-anchor="middle" fill="#2c6848">$</text></svg>
    <span class="f9" style="margin-left:10.300px" data-w="65.700">Standard Seat</span></div>
   <div class="rule d-flex flex-column align-items-center position-relative" style="height:41.400px;padding-top:8px;gap:4.300px"><div class="d-flex align-items-center td" style="padding-left:1px"><svg class="ic s10" style="margin-right:5.500px"><use href="#takeoff"/></svg><span class="f11" data-w="62.300"><b class="fw-bold">DEN</b> to <b class="fw-bold">ATL</b></span></div><span class="f10 tm" data-w="94.700">6:50 AM · 2h 20m</span><svg class="ic s10 rotl position-absolute" style="right:17.500px;top:16px;color:#3a76ae"><use href="#dn"/></svg></div>
   <div class="d-flex align-items-center text-center" style="height:39px"><div class="paxc d-flex flex-column align-items-center"><span class="f10" data-w="36.700">Scarlet</span><span class="f8 tm" data-w="40.700">1A - $ 120</span></div><div class="paxc d-flex flex-column align-items-center"><span class="f10 w7" style="color:#3a76ae" data-w="39">Jordan</span><span class="f8 tm" data-w="49">Select seat</span></div><div class="paxc border-0 d-flex flex-column align-items-center"><span class="f10" data-w="16">Kai</span><span class="f8 tm" data-w="49">Select seat</span></div></div>
   <div style="width:100.500px;height:2px;margin-left:100.500px;background:#3a76ae"></div>
   <div class="colrow d-flex align-items-center f9" style="padding-left:21.400px"><b>A</b><b style="width:31px">B</b><b style="width:41px">C</b><b style="width:39.400px"></b><b>D</b><b style="width:31px">E</b><b style="width:40px">F</b></div>
  </div>
  <div class="d-flex justify-content-between align-items-center f10 flex-shrink-0" style="color:#d0553f;padding:5px 21.500px 0;height:49.500px"><span class="d-flex align-items-center"><svg class="s10 ln" style="margin-right:6.500px" viewBox="0 0 10 10"><path d="M10 5H1M5 1 1 5l4 4"/></svg><span data-w="18">Exit</span></span><span class="d-flex align-items-center"><span data-w="18">Exit</span><svg class="s10 ln" style="margin-left:5px" viewBox="0 0 10 10"><path d="M0 5h9M5 1l4 4-4 4"/></svg></span></div>
  <div class="d-flex flex-shrink-0" style="padding-left:19.300px;height:79.400px">
   <div style="width:106.400px"><div class="blk d-flex align-items-center justify-content-center" style="height:59.700px;width:53px;margin-left:34.700px;padding-top:5px"><svg class="ic" width="20" height="18" viewBox="0 0 20 18"><circle cx="4.200" cy="1.600" r="1.600"/><path d="M1.800 3.700h4.800Q8.200 3.700 8.200 5.500V10H6.900V6.300h-.5V18H4.600v-6.500h-.8V18H2V6.300h-.5V10H.2V5.500Q.2 3.700 1.800 3.700zM9.400 0h.8v17.500h-.8z"/><circle cx="15.400" cy="1.600" r="1.600"/><path d="M13.800 3.700h3.200q1 0 1.400 1.200l1.400 4.300-1.200.4-1.300-3.600 1.500 6.300h-2V18h-1.200v-5.700h-.5V18h-1.200v-5.700h-2L13.400 6l-1.300 3.600-1.200-.4 1.400-4.300q.4-1.200 1.500-1.200z"/></svg></div><div class="blk" style="height:19.700px"></div></div>
   <div style="width:106px;margin-left:50.300px"><div class="blk d-flex align-items-center justify-content-center" style="height:59.700px;width:90px;margin-left:16px;padding-top:5px"><svg class="ic" width="20" height="19" viewBox="0 0 20 19"><path d="M0 6h16v1h1q3 0 3 2.500t-3 3.500l-2 .3q-1 1.700-3 2.200H5Q0 14 0 6zm16 2.500V11q2.200 0 2.200-1.300T16 8.500zM1 17h15l-1.500 1.700h-12z"/><path d="M7 5q-1-1.500 0-2.500T7.500 0M10 5q-1-1.500 0-2.500T10.500 0" fill="none" stroke="currentColor" stroke-width="1.100"/></svg></div><div class="blk" style="height:19.700px"></div></div>
  </div>
  <div id="seats" class="flex-grow-1 overflow-hidden" style="padding-top:18px"></div>
  <div class="foot" style="height:73.400px;padding:6px 13px 0 13.300px"><div class="d-flex justify-content-between"><div class="d-flex flex-column" style="gap:3.800px;padding-top:5.500px"><span class="f8 tm" data-w="55.700">Seats Subtotal</span><span class="f11 td" data-w="43">$ 120.00</span></div><div class="cta d-flex align-items-center justify-content-center" style="width:146px;height:31.700px"><span class="f11 w7" data-w="62">Next Flight</span></div></div>
   <div class="homebar" style="width:108px;height:4.200px;margin-top:23px"></div>
   <div class="d-flex" id="ticks" style="margin:5.500px 0 0 4.500px"></div></div>
 </div>
 <i class="wire c5"></i><i class="pin d5"></i>
 <div class="note n5"><span data-w="272.300">Complex flows jammed into small</span><br><span data-w="61">spaces.</span></div>
</section>
</main>

<script src="https://cdn.jsdelivr.net/npm/bootstrap@5.3.0/dist/js/bootstrap.bundle.min.js"></script>
<script>
// flight cards: the middle one is expanded
document.getElementById('flights').innerHTML=[0,1,0].map(s=>`<div class="fl ${s?'sel':''}"><div class="d-flex">
<div class="tms d-flex flex-column justify-content-center"><div class="d-flex align-items-center"><span class="f11 w7 td" data-w="45.7">7:00 AM</span><i class="dash" style="margin:0 7.500px"></i><span class="f11 w7 td" data-w="45.7">11:35 AM</span></div>
<div class="d-flex align-items-center tm"><span class="f11" data-w="40">4h 35m</span><i class="bg-dark rounded-circle" style="width:2px;height:2px;margin:0 6px"></i><span class="f11" data-w="46">Nonstop</span><svg class="ic s11 tb" style="margin-left:5px"><use href="#info"/></svg></div></div>
<div class="pr d-flex flex-column" style="margin-left:13.500px"><span class="f7 tm w5" style="margin-left:6.500px" data-w="42.3">STANDARD</span><span class="d-flex align-items-center"><i class="rd ${s?'on':''}"></i><span class="f12" style="margin-left:5px" data-w="27.3">$ 119</span></span></div>
<div class="pr d-flex flex-column ms-auto"><span class="f7 tg w5" data-w="56.7">DISCOUNT<b>DEN</b></span><span class="d-flex align-items-center"><i class="rd"></i><span class="f12" style="margin-left:5px" data-w="26.7">$ 90</span></span></div></div>
${s?'<hr><div class="d-flex" style="padding-top:9.500px"><span class="f11 td" data-w="141.3">F9 154 by Frontier Airlines</span></div>':''}</div>`).join('');
// seat map rows: x taken, p priced, S/K passenger initials, o selected
const rows=[[1,'xSpppp',0,'st'],[2,'pppppp',27,''],[3,'ppppop',6.4,''],[4,'pppKpp',6.4,''],[5,'pppppp',6.4,''],[28,'xxpppp',26.5,'dk']];
const X='<svg width="14" height="14" viewBox="0 0 12 12"><path d="m1 1 10 10M11 1 1 11" stroke="#b0b2b1" stroke-width="1.200"/></svg>';
const star='<svg class="starr"><use href="#star"/></svg>';
function seat(c,k){
 if(k==='st'){
  if(c==='x')return `<div class="seat st xx"><div class="ful">${X}</div>${star}</div>`;
  if(c==='S')return `<div class="seat st"><div class="ful">SJ</div>${star}</div>`;
  return `<div class="seat st"><div class="inr">$<br>120</div>${star}</div>`;
 }
 if(c==='x')return `<div class="seat xx pt-2">${X}</div>`;
 if(c==='K')return '<div class="seat full">Ki</div>';
 if(c==='o')return '<div class="seat full"></div>';
 return `<div class="seat ${k}">$<br>100</div>`;
}
document.getElementById('seats').innerHTML=rows.map(([n,s,m,k])=>{
 const a=[...s].map(c=>seat(c,k));
 return `<div class="seatrow d-flex align-items-center" style="margin-top:${m}px"><div class="grp d-flex">${a.slice(0,3).join('')}</div><span class="num f11">${n}</span><div class="grp d-flex">${a.slice(3).join('')}</div></div>`}).join('');
const t='<span class="tick d-flex justify-content-center"><i></i></span>';
document.getElementById('ticks').innerHTML=`<div class="grp d-flex">${t+t+t}</div><div style="width:47.3px"></div><div class="grp d-flex">${t+t+t}</div>`;
// tracking: every label keeps its specified width in the fallback typeface
const labels=[...document.querySelectorAll('[data-w]')].map(e=>{
 const r=document.createRange();r.selectNodeContents(e);
 return [e,(e.dataset.w-r.getBoundingClientRect().width)/(e.textContent.length-1)];
});
labels.forEach(([e,ls])=>{
 const m=parseFloat(getComputedStyle(e).marginRight)||0;
 e.style.letterSpacing=ls+'px';e.style.marginRight=(m-ls)+'px';
});
</script>
</body>
</html>
